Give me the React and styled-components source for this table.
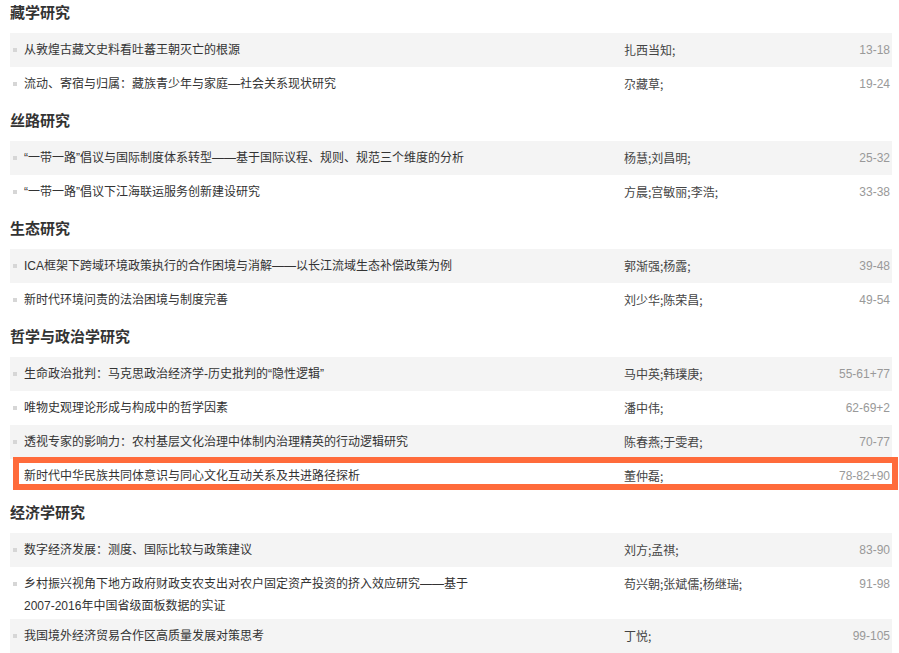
import React from "react";
import styled, { createGlobalStyle } from "styled-components";

const GlobalStyle = createGlobalStyle`
  body {
    margin: 0;
    background: #fff;
    font-family: "Liberation Sans", "Noto Sans CJK SC", sans-serif;
    color: #333;
  }
`;

const Page = styled.div`
  width: 882px;
  padding-left: 10px;
  margin-top: -7px;
`;

const SectionTitle = styled.h3`
  margin: 0;
  height: 40px;
  padding-bottom: 3px;
  box-sizing: border-box;
  display: flex;
  align-items: center;
  font-family: "Noto Sans CJK SC", sans-serif;
  font-size: 15px;
  font-weight: bold;
  color: #333;
`;

const Row = styled.div`
  position: relative;
  display: grid;
  grid-template-columns: 14px 600px 1fr auto;
  align-items: start;
  min-height: 34px;
  box-sizing: border-box;
  padding: 6px 2px 2px 0;
  background: ${(p) => (p.$shade ? "#f4f4f4" : "#fff")};
  font-size: 12px;
  line-height: 22px;
`;

const Bullet = styled.span`
  display: block;
  width: 4px;
  height: 4px;
  margin: 9px 0 0 3px;
  background: #d6d6d6;
`;

const Title = styled.span`
  max-width: 472px;
  color: #333;
`;

const Author = styled.span`
  color: #444;
  font-family: "Noto Sans CJK SC", sans-serif;
`;

const Pages = styled.span`
  color: #999;
  text-align: right;
`;

const Highlight = styled.div`
  position: absolute;
  top: -2px;
  left: 3px;
  right: -6px;
  bottom: 3px;
  border: 6px solid #ff6b3b;
  pointer-events: none;
`;

const sections = [
  {
    name: "藏学研究",
    items: [
      ["从敦煌古藏文史料看吐蕃王朝灭亡的根源", "扎西当知;", "13-18"],
      ["流动、寄宿与归属：藏族青少年与家庭—社会关系现状研究", "尕藏草;", "19-24"],
    ],
  },
  {
    name: "丝路研究",
    items: [
      ["“一带一路”倡议与国际制度体系转型——基于国际议程、规则、规范三个维度的分析", "杨慧;刘昌明;", "25-32"],
      ["“一带一路”倡议下江海联运服务创新建设研究", "方晨;宫敏丽;李浩;", "33-38"],
    ],
  },
  {
    name: "生态研究",
    items: [
      ["ICA框架下跨域环境政策执行的合作困境与消解——以长江流域生态补偿政策为例", "郭渐强;杨露;", "39-48"],
      ["新时代环境问责的法治困境与制度完善", "刘少华;陈荣昌;", "49-54"],
    ],
  },
  {
    name: "哲学与政治学研究",
    items: [
      ["生命政治批判：马克思政治经济学-历史批判的“隐性逻辑”", "马中英;韩璞庚;", "55-61+77"],
      ["唯物史观理论形成与构成中的哲学因素", "潘中伟;", "62-69+2"],
      ["透视专家的影响力：农村基层文化治理中体制内治理精英的行动逻辑研究", "陈春燕;于雯君;", "70-77"],
      ["新时代中华民族共同体意识与同心文化互动关系及共进路径探析", "董仲磊;", "78-82+90", true],
    ],
  },
  {
    name: "经济学研究",
    items: [
      ["数字经济发展：测度、国际比较与政策建议", "刘方;孟祺;", "83-90"],
      ["乡村振兴视角下地方政府财政支农支出对农户固定资产投资的挤入效应研究——基于2007-2016年中国省级面板数据的实证", "苟兴朝;张斌儒;杨继瑞;", "91-98"],
      ["我国境外经济贸易合作区高质量发展对策思考", "丁悦;", "99-105"],
    ],
  },
];

export default function App() {
  return (
    <>
      <GlobalStyle />
      <Page>
        {sections.map((s) => (
          <section key={s.name}>
            <SectionTitle>{s.name}</SectionTitle>
            {s.items.map(([title, author, pages, marked], i) => (
              <Row key={title} $shade={i % 2 === 0}>
                <Bullet />
                <Title>{title}</Title>
                <Author>{author}</Author>
                <Pages>{pages}</Pages>
                {marked && <Highlight />}
              </Row>
            ))}
          </section>
        ))}
      </Page>
    </>
  );
}
